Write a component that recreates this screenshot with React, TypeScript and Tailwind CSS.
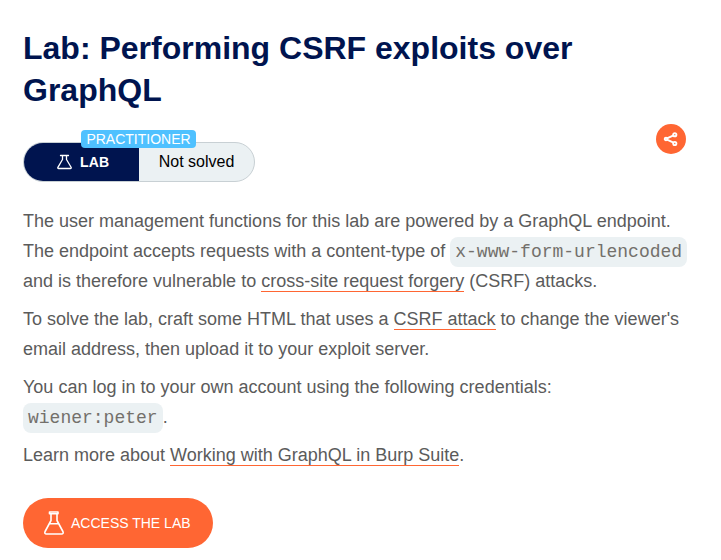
import React from 'react';

function Flask({ className }: { className: string }) {
  return (
    <svg viewBox="0 0 20 24" fill="none" stroke="currentColor" strokeWidth="1.6" strokeLinecap="round" strokeLinejoin="round" className={className}>
      <path d="M5.500 1h8.500v1.700H5.500zM7 3v6.500L1.100 20.500c-.7 1.400 0 2.500 1.300 2.500h15.200c1.300 0 2-1.100 1.300-2.500L13 9.500V3M5.600 12.700h8.800" />
    </svg>
  );
}

function SmallFlask({ className }: { className: string }) {
  return (
    <svg viewBox="0 0 15 16" fill="none" stroke="currentColor" strokeWidth="1.3" strokeLinecap="round" strokeLinejoin="round" className={className}>
      <path d="M3.500 1.500h8M5.500 1.500v4L.9 13.300c-.4.700 0 1.200.7 1.200h11.800c.7 0 1.100-.5.700-1.200L9.500 5.500v-4" />
    </svg>
  );
}

function Code({ children }: { children: React.ReactNode }) {
  return <code className="rounded-lg bg-[#ebf1f3] px-[5px] py-[5px] font-['Liberation_Mono',monospace] text-[18px] leading-[20px] text-[#73706b]">{children}</code>;
}

function TextLink({ children }: { children: React.ReactNode }) {
  return <a href="#" className="border-b border-[#ff6633]">{children}</a>;
}

export default function App() {
  return (
    <main className="h-[560px] w-[721px] overflow-hidden bg-white pl-[23px] pt-[27px] font-['Liberation_Sans',Arial,sans-serif] text-[#5b5b5b]">
      <h1 className="text-[32px] font-bold leading-[42px] text-[#00144f]">Lab: Performing CSRF exploits over<br />GraphQL</h1>
      <div className="mt-[13px] flex w-[663px] items-start justify-between">
        <div className="relative mt-[18px] flex h-[40px] w-[232px] rounded-full border border-[#c8d0d4] bg-[#ebf1f3]">
          <div className="flex w-[115px] items-center rounded-l-full bg-[#00144f] pl-[33px] text-[14px] font-bold text-white">
            <SmallFlask className="mr-[8px] h-[16px] w-[15px]" /><span className="tracking-[0.2px]">LAB</span>
          </div>
          <div className="flex flex-1 items-center justify-center text-[16px] text-black">Not solved</div>
          <span className="absolute left-[57px] top-[-13px] h-[18px] w-[115px] rounded bg-[#4fc1ff] text-center text-[14px] leading-[18px] text-white">PRACTITIONER</span>
        </div>
        <button className="flex size-[30px] items-center justify-center rounded-full bg-[#ff6633] text-white">
          <svg viewBox="0 0 16 16" className="size-[16px]" fill="none" stroke="currentColor" strokeWidth="1.9"><path d="M4 7.300l6.500-3M4 8.700l6.500 3" /><circle cx="3" cy="8" r="1.300" /><circle cx="11.800" cy="3.700" r="1.600" /><circle cx="11.800" cy="12.500" r="1.600" /></svg>
        </button>
      </div>
      <div className="mt-[24px] flex flex-col gap-[8px] whitespace-nowrap text-[18px] leading-[30px]">
        <p>The user management functions for this lab are powered by a GraphQL endpoint.<br />The endpoint accepts requests with a content-type of <Code>x-www-form-urlencoded</Code><br />and is therefore vulnerable to <TextLink>cross-site request forgery</TextLink> (CSRF) attacks.</p>
        <p>To solve the lab, craft some HTML that uses a <TextLink>CSRF attack</TextLink> to change the viewer's<br />email address, then upload it to your exploit server.</p>
        <p>You can log in to your own account using the following credentials:<br /><Code>wiener:peter</Code>.</p>
        <p>Learn more about <TextLink>Working with GraphQL in Burp Suite</TextLink>.</p>
      </div>
      <button className="mt-[28px] flex h-[50px] w-[190px] items-center rounded-full bg-[#ff6633] pl-[21px] text-[14px] text-white">
        <Flask className="mr-[7px] h-[24px] w-[20px]" />ACCESS THE LAB
      </button>
    </main>
  );
}
